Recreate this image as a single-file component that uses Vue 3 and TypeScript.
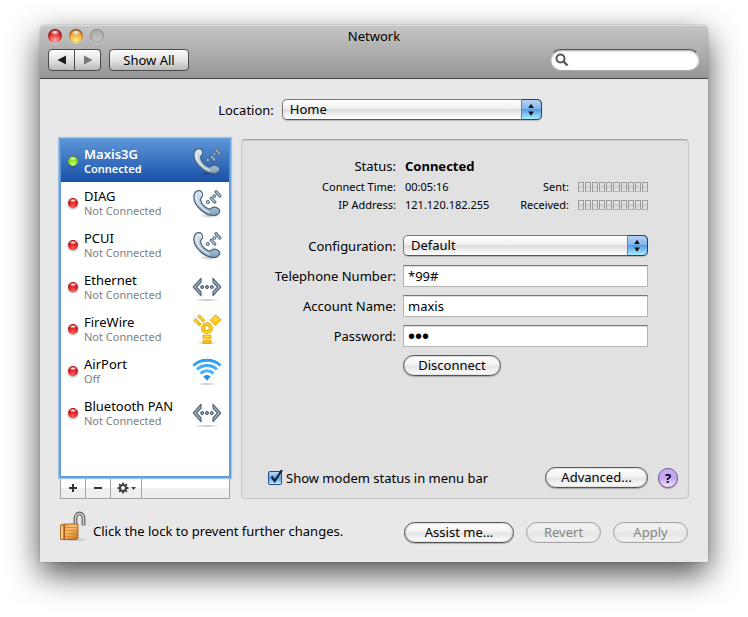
<script setup lang="ts">
import { ref } from 'vue'

type IconKind = 'phone' | 'ethernet' | 'firewire' | 'airport'

interface Service {
  name: string
  state: string
  icon: IconKind
  online: boolean
}

const services: Service[] = [
  { name: 'Maxis3G', state: 'Connected', icon: 'phone', online: true },
  { name: 'DIAG', state: 'Not Connected', icon: 'phone', online: false },
  { name: 'PCUI', state: 'Not Connected', icon: 'phone', online: false },
  { name: 'Ethernet', state: 'Not Connected', icon: 'ethernet', online: false },
  { name: 'FireWire', state: 'Not Connected', icon: 'firewire', online: false },
  { name: 'AirPort', state: 'Off', icon: 'airport', online: false },
  { name: 'Bluetooth PAN', state: 'Not Connected', icon: 'ethernet', online: false },
]

const selected = ref(0)
const search = ref('')
const place = ref('Home')
const configuration = ref('Default')
const phoneNumber = ref('*99#')
const account = ref('maxis')
const password = ref('3gp')
const showStatus = ref(true)
</script>

<template>
  <div class="desktop">
    <svg class="defs" width="0" height="0" aria-hidden="true">
      <defs>
        <linearGradient id="steel" x1="0" y1="0" x2="0" y2="1">
          <stop offset="0" stop-color="#e2edf4" />
          <stop offset="1" stop-color="#86a3b8" />
        </linearGradient>
        <linearGradient id="gold" x1="0" y1="0" x2="0" y2="1">
          <stop offset="0" stop-color="#ffe23e" />
          <stop offset="1" stop-color="#f7c20c" />
        </linearGradient>
        <linearGradient id="wave" gradientUnits="userSpaceOnUse" x1="0" y1="4" x2="0" y2="25">
          <stop offset="0" stop-color="#2c9cf0" />
          <stop offset="0.5" stop-color="#4fb4fb" />
          <stop offset="1" stop-color="#1d86de" />
        </linearGradient>
        <linearGradient id="brass" x1="0" y1="0" x2="1" y2="1">
          <stop offset="0" stop-color="#e89b3c" />
          <stop offset="0.45" stop-color="#f6c077" />
          <stop offset="1" stop-color="#c0660f" />
        </linearGradient>
        <radialGradient id="shade">
          <stop offset="0" stop-color="#000" stop-opacity="0.28" />
          <stop offset="1" stop-color="#000" stop-opacity="0" />
        </radialGradient>
      </defs>
    </svg>

    <main class="window">
      <header class="toolbar">
        <div class="titlebar">
          <div class="lights">
            <button class="light close" aria-label="Close"></button>
            <button class="light minimize" aria-label="Minimize"></button>
            <button class="light zoom" aria-label="Zoom" disabled></button>
          </div>
          <h1>Network</h1>
        </div>
        <div class="tools">
          <div class="history">
            <button aria-label="Back">
              <svg width="10" height="10" viewBox="0 0 10 10"><path d="M9 .5v9L.5 5z" fill="#1c1c1c" /></svg>
            </button>
            <button aria-label="Forward" disabled>
              <svg width="10" height="10" viewBox="0 0 10 10"><path d="M1 .5v9L9.500 5z" fill="#777" /></svg>
            </button>
          </div>
          <button class="show-all">Show All</button>
          <label class="search">
            <svg width="14" height="14" viewBox="0 0 14 14">
              <circle cx="5.500" cy="5.500" r="4" fill="none" stroke="#555" stroke-width="2" />
              <path d="M8.500 8.500l4 4" stroke="#555" stroke-width="2.400" />
            </svg>
            <input v-model="search" type="text" aria-label="Search" />
          </label>
        </div>
      </header>

      <div class="content">
        <div class="location">
          <label for="location">Location:</label>
          <div class="popup">
            <select id="location" v-model="place">
              <option>Home</option>
            </select>
            <svg class="arrows" viewBox="0 0 20 19">
              <path d="M6.500 8L9.500 3.500L12.500 8zM6.500 11.500h6l-3 4.500z" fill="#111" />
            </svg>
          </div>
        </div>

        <div class="columns">
          <nav class="sidebar">
            <ul class="services">
              <li v-for="(service, i) in services" :key="service.name">
                <button class="service" :class="{ selected: selected === i }" @click="selected = i">
                  <span class="dot" :class="{ online: service.online }"></span>
                  <span class="text">
                    <span class="name">{{ service.name }}</span>
                    <span class="state">{{ service.state }}</span>
                  </span>
                  <svg v-if="service.icon === 'phone'" width="30" height="30" viewBox="0 0 30 30">
                    <ellipse cx="18" cy="27.500" rx="11" ry="2.500" fill="url(#shade)" />
                    <path
                      d="M3.200 4.500C5.200 2.300 8 2.200 9.400 3.600C10.800 5.200 10.800 7.900 9.800 9.200C9 10.200 8.200 10.500 8.500 11.800C9.500 15.500 12.800 19.300 17 21C18.500 21.500 19.500 19.600 21.500 19.200C24 18.700 27.200 20.600 27.700 22.500C28.200 24.500 26 26.800 23.500 27.300C14 28.500 1.200 18.200 1.900 8C2 6.500 2.300 5.500 3.200 4.500Z"
                      fill="url(#steel)" stroke="#46637c" stroke-width="1.200"
                    />
                    <path d="M4.300 8.500c0 6 5.800 13 13.200 16" fill="none" stroke="#f6fafc" stroke-width="1.400" opacity="0.75" />
                    <path d="M19.300 10.200l3.400 3.800M24 3.600l3.800 4.400" stroke="#4a657b" stroke-width="3.200" stroke-linecap="round" />
                    <path d="M19.300 10.200l3.400 3.800M24 3.600l3.800 4.400" stroke="#b4c6d3" stroke-width="1.400" stroke-linecap="round" />
                    <circle cx="15.800" cy="14" r="1.600" fill="#b4c6d3" stroke="#4a657b" stroke-width="0.900" />
                    <circle cx="22.300" cy="8" r="1.500" fill="#b4c6d3" stroke="#4a657b" stroke-width="0.900" />
                  </svg>
                  <svg v-else-if="service.icon === 'ethernet'" width="30" height="30" viewBox="0 0 30 30">
                    <ellipse cx="15" cy="28" rx="13" ry="1.500" fill="url(#shade)" />
                    <path
                      d="M9 6.300v3.700L4.500 15L9 20v3.700L1.300 15ZM21 6.300v3.700L25.500 15L21 20v3.700L28.700 15Z"
                      fill="#aebccb" stroke="#53647a" stroke-width="1.200" stroke-linejoin="round"
                    />
                    <g fill="#8fa1b6" stroke="#46566c" stroke-width="1">
                      <circle cx="10.200" cy="15" r="1.500" /><circle cx="15" cy="15" r="1.500" /><circle cx="19.800" cy="15" r="1.500" />
                    </g>
                  </svg>
                  <svg v-else-if="service.icon === 'firewire'" width="30" height="30" viewBox="0 0 30 30">
                    <ellipse cx="15" cy="29" rx="11" ry="1.500" fill="url(#shade)" />
                    <g fill="url(#gold)" stroke="#dda105" stroke-width="0.900">
                      <path d="M23.500 0.800l5.500 5l-5.500 5.500l-5.500-5z" />
                      <path d="M1.600 6.200l2-1.800l5.600 5.600l-2 1.800zM5.600 2.600l2-1.800l5.400 5.600l-2 1.800z" />
                      <path d="M11 21.200h8v3h-8zM11 26.200h8v3h-8z" />
                    </g>
                    <circle cx="15" cy="14.200" r="4" fill="#fffbe0" stroke="#dda105" stroke-width="3.800" />
                    <circle cx="15" cy="14.200" r="4" fill="none" stroke="#fbd21f" stroke-width="2.300" />
                  </svg>
                  <svg v-else width="30" height="30" viewBox="0 0 30 30">
                    <ellipse cx="15" cy="28" rx="10" ry="1.500" fill="url(#shade)" />
                    <g fill="none" stroke="url(#wave)" stroke-width="3">
                      <path d="M1.500 9.600C8.500 2.600 21.500 2.600 28.500 9.600" />
                      <path d="M5.100 13.600C10.500 8.200 19.500 8.200 24.900 13.600" />
                      <path d="M8.600 17.400C12.200 13.800 17.800 13.800 21.400 17.400" />
                    </g>
                    <path d="M11.400 20.600c2.200-2 5-2 7.200 0L15 24.700z" fill="#2490e8" />
                  </svg>
                </button>
              </li>
            </ul>
            <div class="actions">
              <button aria-label="Add service">
                <svg width="10" height="10" viewBox="0 0 10 10"><path d="M5 1v8M1 5h8" stroke="#333" stroke-width="2" /></svg>
              </button>
              <button aria-label="Remove service">
                <svg width="10" height="10" viewBox="0 0 10 10"><path d="M1 5h8" stroke="#333" stroke-width="2" /></svg>
              </button>
              <button class="gear" aria-label="Service actions">
                <svg width="20" height="12" viewBox="0 0 20 12">
                  <circle cx="7" cy="6" r="3" fill="none" stroke="#444" stroke-width="2.200" />
                  <path d="M7 .5V3M7 9v2.500M1.500 6H4M10 6h2.500M3.100 2.100l1.600 1.600M9.300 8.300l1.600 1.600M3.100 9.900l1.600-1.600M9.300 3.700l1.600-1.600" stroke="#444" stroke-width="1.900" />
                  <path d="M15 5h5l-2.500 3z" fill="#444" />
                </svg>
              </button>
            </div>
          </nav>

          <section class="panel">
            <dl class="stats">
              <dt class="big">Status:</dt>
              <dd class="big strong">Connected</dd>
              <dt>Connect Time:</dt>
              <dd>00:05:16</dd>
              <dt>Sent:</dt>
              <dd class="meter"><i v-for="n in 10" :key="n"></i></dd>
              <dt>IP Address:</dt>
              <dd>121.120.182.255</dd>
              <dt>Received:</dt>
              <dd class="meter"><i v-for="n in 10" :key="n"></i></dd>
            </dl>

            <form class="form" @submit.prevent>
              <label for="configuration">Configuration:</label>
              <div class="popup">
                <select id="configuration" v-model="configuration">
                  <option>Default</option>
                </select>
                <svg class="arrows" viewBox="0 0 20 19">
                  <path d="M6.500 8L9.500 3.500L12.500 8zM6.500 11.500h6l-3 4.500z" fill="#111" />
                </svg>
              </div>
              <label for="telephone">Telephone Number:</label>
              <input id="telephone" v-model="phoneNumber" class="field" type="text" />
              <label for="account">Account Name:</label>
              <input id="account" v-model="account" class="field" type="text" />
              <label for="password">Password:</label>
              <input id="password" v-model="password" class="field" type="password" />
              <button class="pill disconnect" type="button">Disconnect</button>
            </form>

            <div class="options">
              <label class="check">
                <span class="box">
                  <input v-model="showStatus" type="checkbox" />
                  <svg v-if="showStatus" width="16" height="16" viewBox="0 0 16 16">
                    <path d="M3.500 6.500l3.200 4.500L14 0" fill="none" stroke="#12203c" stroke-width="2.200" />
                  </svg>
                </span>
                Show modem status in menu bar
              </label>
              <button class="pill advanced">Advanced...</button>
              <button class="help" aria-label="Help">?</button>
            </div>
          </section>
        </div>

        <footer class="footer">
          <button class="lock" aria-label="Lock">
            <svg width="28" height="32" viewBox="0 0 28 32">
              <ellipse cx="14" cy="28.500" rx="14" ry="2" fill="url(#shade)" />
              <path d="M15.500 14V8c0-7.500 8 -7.500 8 0v6.500" fill="none" stroke="#5e5e5e" stroke-width="3.800" />
              <path d="M15.500 14V8c0-7.500 8 -7.500 8 0v6.500" fill="none" stroke="#d2d2d2" stroke-width="1.500" />
              <path d="M.5 14l4-1h13.500v14l-2.500 1.500H.5z" fill="url(#brass)" stroke="#9a5716" stroke-width="0.800" />
              <path d="M4.200 13.500v14.500" stroke="#a04f10" stroke-width="1.400" />
              <path d="M5.500 16.500h12M5.500 19.500h12M5.500 22.500h12M5.500 25.500h12" stroke="#dd8a2b" stroke-width="1" />
              <path d="M2 15v12" stroke="#ffdf9c" stroke-width="1" />
            </svg>
          </button>
          <span class="note">Click the lock to prevent further changes.</span>
          <button class="pill assist">Assist me...</button>
          <button class="pill" disabled>Revert</button>
          <button class="pill" disabled>Apply</button>
        </footer>
      </div>
    </main>
  </div>
</template>

<style>
body {
  margin: 0;
  background: #fff;
}
</style>

<style scoped>
.desktop {
  box-sizing: border-box;
  display: flex;
  min-height: 100vh;
  padding: 25px 40px 55px;
  font: 13px/16px "Lucida Grande", "Noto Sans", "Open Sans", sans-serif;
  color: #000;
  overflow: hidden;
}
.desktop *,
.desktop *::before {
  box-sizing: border-box;
}
.defs {
  position: absolute;
}
button,
input,
select {
  margin: 0;
  padding: 0;
  border: 0;
  font: inherit;
  color: inherit;
  background: none;
  outline: none;
}
.window {
  flex: 1;
  display: flex;
  flex-direction: column;
  min-width: 0;
  border-radius: 5px 5px 0 0;
  background: #e8e8e8;
  box-shadow: 0 0 1px rgba(0, 0, 0, 0.7), 0 12px 32px rgba(0, 0, 0, 0.7);
}
.toolbar {
  height: 54px;
  padding: 3px 8px 0;
  border-bottom: 1px solid #454545;
  border-radius: 5px 5px 0 0;
  background: linear-gradient(#c6c6c6, #969696);
  box-shadow: inset 0 1px #dcdcdc;
}
.titlebar {
  display: grid;
  grid-template-columns: 1fr auto 1fr;
  align-items: center;
  height: 16px;
}
.lights {
  display: flex;
  gap: 7px;
}
.light {
  width: 14px;
  height: 14px;
  border-radius: 50%;
}
.light.close {
  background: radial-gradient(ellipse 5px 3px at 50% 22%, #fff, transparent), radial-gradient(circle at 50% 85%, #ffb4b0, #e2282b 55%, #8e1214 100%);
  box-shadow: inset 0 1px 2px #4d0a0a, 0 1px rgba(255, 255, 255, 0.4);
}
.light.minimize {
  background: radial-gradient(ellipse 5px 3px at 50% 22%, #fff, transparent), radial-gradient(circle at 50% 85%, #fff17e, #ef9f3c 60%, #8a4410 100%);
  box-shadow: inset 0 1px 2px #6b2c08, 0 1px rgba(255, 255, 255, 0.4);
}
.light.zoom {
  background: linear-gradient(#aaa, #c9c9c9);
  box-shadow: inset 0 0 2px #555, 0 1px rgba(255, 255, 255, 0.4);
}
h1 {
  margin: 0;
  font: inherit;
}
.tools {
  display: flex;
  gap: 8px;
  margin-top: 5px;
}
.history {
  display: flex;
}
.history button,
.show-all {
  height: 22px;
  border: 1px solid #4b4b4b;
  border-radius: 4px;
  background: linear-gradient(#fcfcfc, #e4e4e4 50%, #b9b9b9);
}
.history button {
  display: flex;
  align-items: center;
  justify-content: center;
  width: 27px;
}
.history button:first-child {
  border-radius: 4px 0 0 4px;
}
.history button:last-child {
  width: 26px;
  border-left: 0;
  border-radius: 0 4px 4px 0;
}
.show-all {
  width: 80px;
}
.search {
  display: flex;
  align-items: center;
  gap: 4px;
  width: 150px;
  height: 22px;
  margin-left: auto;
  padding: 0 8px 0 4px;
  border: 1px solid #aaa;
  border-top-color: #555;
  border-radius: 11px;
  background: #fff;
  box-shadow: inset 0 1px 2px rgba(0, 0, 0, 0.35);
}
.search input {
  flex: 1;
  min-width: 0;
}
.content {
  flex: 1;
  display: flex;
  flex-direction: column;
  padding: 20px 19px 19px 20px;
}
.location {
  display: flex;
  align-items: center;
  justify-content: center;
  gap: 8px;
  padding-left: 11px;
}
.location .popup {
  width: 260px;
}
.popup {
  position: relative;
  height: 21px;
}
.popup select {
  display: block;
  appearance: none;
  width: 100%;
  height: 21px;
  padding: 0 28px 2px 7px;
  border: 1px solid #5c5c5c;
  border-color: #777 #777 #555;
  border-radius: 5px;
  background: linear-gradient(#fff, #f0f0f0 45%, #dcdcdc 50%, #fff);
  box-shadow: 0 1px 1px rgba(0, 0, 0, 0.2);
}
.arrows {
  position: absolute;
  top: 0;
  right: 0;
  width: 21px;
  height: 21px;
  border: 1px solid #24407f;
  border-left-color: #5a86c4;
  border-radius: 0 5px 5px 0;
  background: linear-gradient(#b5d3f3, #82b4ec 48%, #569be6 50%, #a8ecff);
  pointer-events: none;
}
.columns {
  flex: 1;
  display: flex;
  gap: 11px;
  margin-top: 19px;
}
.sidebar {
  display: flex;
  flex-direction: column;
  width: 170px;
}
.services {
  flex: 1;
  margin: 0;
  padding: 0;
  list-style: none;
  border: 1px solid #5b97d8;
  background: #fff;
  box-shadow: 0 0 0 1px #6ba3dd, 0 0 1px 2px #a0c3e8;
  z-index: 1;
}
.service {
  display: flex;
  align-items: center;
  width: 100%;
  height: 42px;
  padding: 0 7px;
  text-align: left;
}
.service.selected {
  color: #fff;
  background: linear-gradient(#5c94d7, #1750a7);
}
.dot {
  width: 10px;
  height: 10px;
  border-radius: 50%;
  background: radial-gradient(ellipse 4px 2px at 50% 25%, #fff, transparent), radial-gradient(circle at 50% 80%, #ff5a50, #cb1018 60%, #85080e);
  box-shadow: 0 1px 2px rgba(0, 0, 0, 0.4);
}
.dot.online {
  background: radial-gradient(ellipse 4px 2px at 50% 25%, #fff, transparent), radial-gradient(circle at 50% 80%, #d8ff6a, #6fce12 60%, #2f7a08);
}
.text {
  flex: 1;
  display: flex;
  flex-direction: column;
  margin-left: 6px;
  white-space: nowrap;
}
.state {
  font-size: 11px;
  line-height: 14px;
  color: #808080;
}
.selected .name,
.selected .state {
  font-weight: 600;
  color: #fff;
}
.actions {
  display: flex;
  height: 22px;
  border: 1px solid #a5a5a5;
  background: linear-gradient(#fff 48%, #f0f0f0 50%, #ededed);
}
.actions button {
  display: flex;
  align-items: center;
  justify-content: center;
  width: 25px;
  border-right: 1px solid #a5a5a5;
}
.actions .gear {
  width: 31px;
}
.panel {
  flex: 1;
  display: flex;
  flex-direction: column;
  padding: 17px 10px 10px 29px;
  border: 1px solid #c6c6c6;
  border-top-color: #a2a2a2;
  border-radius: 4px;
  background: #e1e1e1;
  box-shadow: inset 0 1px 1px rgba(0, 0, 0, 0.1);
}
.stats {
  display: grid;
  grid-template-columns: 125px 1fr auto 70px;
  column-gap: 9px;
  margin: 0 30px 0 0;
  font-size: 11px;
  line-height: 18px;
}
.stats dt {
  text-align: right;
}
.stats dd {
  margin: 0;
}
.stats .big {
  margin-bottom: 3px;
  font-size: 13px;
}
.stats .strong {
  grid-column: span 3;
  font-weight: 700;
}
.meter {
  display: flex;
  align-items: center;
  gap: 1px;
}
.meter i {
  flex: 1;
  height: 10px;
  border: 1px solid #999;
  border-bottom-color: #b5b5b5;
  background: linear-gradient(#e9e9e9, #cfcfcf 50%, #e6e6e6);
}
.form {
  display: grid;
  grid-template-columns: 125px 1fr;
  grid-auto-rows: 22px;
  gap: 8px 7px;
  margin: 21px 30px 0 0;
}
.form label {
  line-height: 22px;
  text-align: right;
  white-space: nowrap;
}
.field {
  width: 100%;
  height: 22px;
  padding: 0 4px;
  border: 1px solid #b4b4b4;
  border-top-color: #757575;
  background: #fff;
  box-shadow: inset 0 1px 1px #ddd;
}
.field[type="password"] {
  font-family: "Liberation Sans", sans-serif;
  font-size: 20px;
}
.pill {
  min-width: 75px;
  height: 21px;
  padding-bottom: 2px;
  border: 1px solid #555;
  border-radius: 11px;
  background: linear-gradient(#fff, #f2f2f2 48%, #e3e3e3 52%, #fff);
  box-shadow: inset 0 0 2px #999, 0 1px 1px rgba(0, 0, 0, 0.25);
  white-space: nowrap;
}
.pill:disabled {
  color: #858585;
  border-color: #a4a4a4;
  background: linear-gradient(#f3f3f3, #ececec 48%, #e4e4e4 52%, #f3f3f3);
  box-shadow: inset 0 0 2px #ccc;
}
.disconnect {
  grid-column: 2;
  width: 98px;
}
.options {
  display: flex;
  align-items: center;
  margin-top: auto;
}
.check {
  display: flex;
  align-items: center;
  gap: 2px;
  margin: 0 auto 0 -3px;
  white-space: nowrap;
}
.box {
  position: relative;
  display: flex;
  width: 16px;
  height: 16px;
}
.box input {
  appearance: none;
  width: 14px;
  height: 14px;
  margin: 1px 0 0;
  border: 1px solid #2a4a8e;
  border-radius: 2px;
  background: linear-gradient(#bcd7f5, #64a3e8 50%, #b6f1ff);
}
.box svg {
  position: absolute;
  top: 0;
  left: 0;
  pointer-events: none;
}
.advanced {
  width: 103px;
}
.help {
  width: 20px;
  height: 20px;
  margin-left: 10px;
  border: 1px solid #6d5795;
  border-radius: 50%;
  font-weight: 700;
  line-height: 16px;
  background: linear-gradient(#c9b0f2, #c3a3f0 50%, #f3e6ff);
  box-shadow: 0 1px 1px rgba(0, 0, 0, 0.3);
}
.footer {
  display: flex;
  align-items: flex-end;
  gap: 12px;
  height: 33px;
  margin-top: 11px;
  padding-right: 1px;
}
.lock {
  display: flex;
  width: 28px;
  height: 32px;
}
.note {
  flex: 1;
  margin-left: -7px;
  line-height: 24px;
  white-space: nowrap;
}
.assist {
  width: 110px;
}
</style>
